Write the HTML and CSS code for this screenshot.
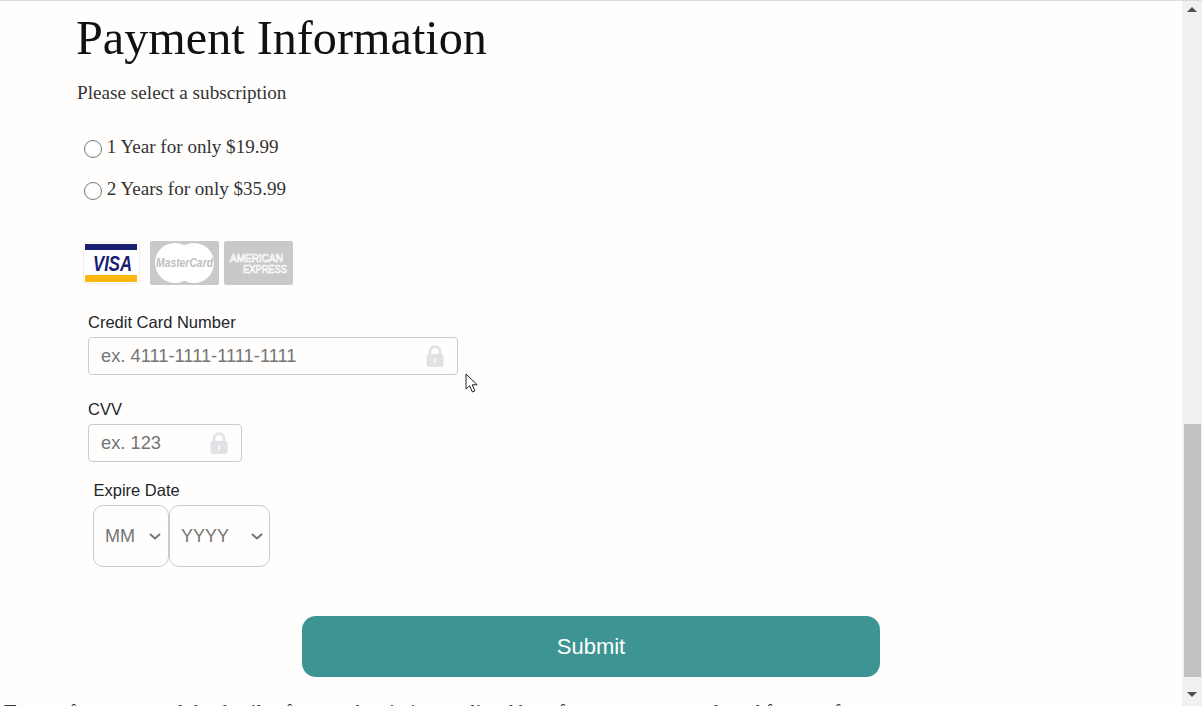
FILE: index.html
```html
<!DOCTYPE html>
<html lang="en">
<head>
    <meta charset="UTF-8">
    <meta name="viewport" content="width=device-width, initial-scale=1.0">
    <title>Payment Information</title>
    <link rel="stylesheet" href="styles.css">
</head>
<body>
    <div class="page">
        <main class="content">
            <h1>Payment Information</h1>
            <p class="intro">Please select a subscription</p>

            <div class="plans">
                <label class="plan plan-first"><input type="radio" name="plan"> 1 Year for only $19.99</label>
                <label class="plan plan-second"><input type="radio" name="plan"> 2 Years for only $35.99</label>
            </div>

            <!-- Card logos -->
            <div class="cards">
                <svg class="card-visa" width="57" height="42" viewBox="0 0 57 42">
                    <rect x="0.5" y="0.5" width="56" height="41" rx="2" fill="#fff" stroke="#eeeeee"/>
                    <rect x="2" y="2" width="52" height="6" fill="#1a2070"/>
                    <rect x="2" y="33" width="52" height="7" fill="#fbb50f"/>
                    <text x="10" y="29" textLength="39" lengthAdjust="spacingAndGlyphs" class="visa-text">VISA</text>
                </svg>
                <svg width="69" height="44" viewBox="0 0 69 44">
                    <rect width="69" height="44" rx="2" fill="#c9c9c9"/>
                    <circle cx="25" cy="22" r="20" fill="#fff"/>
                    <circle cx="44" cy="22" r="20" fill="#fff"/>
                    <text x="6" y="26" textLength="57" lengthAdjust="spacingAndGlyphs" class="mc-text">MasterCard</text>
                </svg>
                <svg width="69" height="44" viewBox="0 0 69 44">
                    <rect width="69" height="44" rx="2" fill="#c9c9c9"/>
                    <text x="6" y="21" textLength="53" lengthAdjust="spacingAndGlyphs" class="amex-text">AMERICAN</text>
                    <text x="19" y="32" textLength="44" lengthAdjust="spacingAndGlyphs" class="amex-text">EXPRESS</text>
                </svg>
            </div>

            <form class="payment-form">
                <div class="field field-number">
                    <label for="card-number">Credit Card Number</label>
                    <div class="input-wrap input-number">
                        <input type="text" id="card-number" placeholder="ex. 4111-1111-1111-1111">
                        <svg class="lock" width="18" height="22" viewBox="0 0 18 22">
                            <path d="M4 9V6.5a5 5 0 0 1 10 0V9" fill="none" stroke="#e1e2e6" stroke-width="2.6"/>
                            <rect x="0.5" y="9" width="17" height="13" rx="2" fill="#e1e2e6"/>
                            <rect x="8" y="13" width="2" height="5" fill="#f7f7f8"/>
                        </svg>
                    </div>
                </div>

                <div class="field field-cvv">
                    <label for="card-cvv">CVV</label>
                    <div class="input-wrap input-cvv">
                        <input type="text" id="card-cvv" placeholder="ex. 123">
                        <svg class="lock" width="18" height="22" viewBox="0 0 18 22">
                            <path d="M4 9V6.5a5 5 0 0 1 10 0V9" fill="none" stroke="#e1e2e6" stroke-width="2.6"/>
                            <rect x="0.5" y="9" width="17" height="13" rx="2" fill="#e1e2e6"/>
                            <rect x="8" y="13" width="2" height="5" fill="#f7f7f8"/>
                        </svg>
                    </div>
                </div>

                <div class="field field-expire">
                    <label>Expire Date</label>
                    <div class="expire-row">
                        <div class="select-wrap select-month">
                            <select><option>MM</option></select>
                            <svg class="chevron" width="12" height="7" viewBox="0 0 12 7"><path d="M1 1l5 4.5L11 1" fill="none" stroke="#757575" stroke-width="2"/></svg>
                        </div>
                        <div class="select-wrap select-year">
                            <select><option>YYYY</option></select>
                            <svg class="chevron" width="12" height="7" viewBox="0 0 12 7"><path d="M1 1l5 4.5L11 1" fill="none" stroke="#757575" stroke-width="2"/></svg>
                        </div>
                    </div>
                </div>

                <div class="submit-row">
                    <button type="submit">Submit</button>
                </div>
            </form>

            <p class="next-text">Terms of payment and the details of your subscription are listed here for your own records and future reference</p>
        </main>

        <div class="scrollbar">
            <div class="scroll-btn"><span class="arrow-up"></span></div>
            <div class="scroll-track"><div class="scroll-thumb"></div></div>
            <div class="scroll-btn scroll-btn-down"><span class="arrow-down"></span></div>
        </div>
    </div>

    <!-- mouse pointer -->
    <svg class="pointer" width="14" height="20" viewBox="0 0 14 20">
        <path d="M1 1v15l3.6-3.3L7.4 19l2.5-1.1-2.7-6.1h5z" fill="#fff" stroke="#222" stroke-width="1"/>
    </svg>
</body>
</html>
```

FILE: styles.css
```css
html, body {
    margin: 0;
    height: 100%;
    overflow: hidden;
}

body {
    background-color: #fffefd;
    font-family: "Liberation Serif", serif;
    color: #333;
}

.page {
    display: flex;
    height: 706px;
    border-top: 1px solid #dedede;
    box-sizing: border-box;
}

.content {
    flex: 1;
    padding-left: 77px;
    overflow: hidden;
}

h1 {
    margin: 9px 0 0 -1px;
    font-size: 48.2px;
    font-weight: 400;
    line-height: 55px;
    color: #111;
}

.intro {
    margin: 17px 0 0;
    font-size: 19.2px;
    line-height: 22px;
}

.plans {
    margin: 32px 0 0 7px;
}

.plan {
    display: block;
    font-size: 19.1px;
    line-height: 22px;
}

.plan input {
    width: 18px;
    height: 18px;
    margin: 0;
    vertical-align: -5px;
}

.plan-second {
    margin-top: 19.5px;
}

.cards {
    display: flex;
    align-items: center;
    gap: 5px;
    margin: 41.5px 0 0 6px;
}

.cards svg {
    overflow: visible;
}

.card-visa {
    margin-right: 5px;
}

.visa-text {
    font-family: "Liberation Sans", sans-serif;
    font-size: 22px;
    font-weight: 700;
    font-style: italic;
    fill: #1a2070;
}

.mc-text {
    font-family: "Liberation Sans", sans-serif;
    font-size: 12px;
    font-weight: 700;
    font-style: italic;
    fill: #c0c0c0;
}

.amex-text {
    font-family: "Liberation Sans", sans-serif;
    font-size: 11px;
    font-weight: 400;
    fill: #c9c9c9;
    stroke: #fff;
    stroke-width: 0.7;
}

.payment-form {
    font-family: "Liberation Sans", sans-serif;
}

.field label {
    display: block;
    font-size: 16.5px;
    line-height: 18px;
    color: #212529;
}

.field-number {
    margin: 28px 0 0 11px;
}

.field-cvv {
    margin: 25px 0 0 11px;
}

.field-expire {
    margin: 19px 0 0 16px;
}

.field-expire label {
    padding-left: 0.5px;
}

.input-wrap {
    position: relative;
    margin-top: 6px;
}

.input-number {
    width: 370px;
}

.input-cvv {
    width: 154px;
}

.input-wrap input {
    box-sizing: border-box;
    width: 100%;
    height: 38px;
    padding: 0 12px;
    border: 1px solid #ccc;
    border-radius: 4px;
    background: transparent;
    font-family: "Liberation Sans", sans-serif;
    font-size: 18.3px;
    color: #333;
}

.input-wrap input::placeholder {
    color: #757575;
    opacity: 1;
}

.lock {
    position: absolute;
    top: 8px;
    right: 14px;
}

.expire-row {
    display: flex;
    margin-top: 6px;
}

.select-wrap {
    position: relative;
}

.select-wrap select {
    appearance: none;
    box-sizing: border-box;
    width: 100%;
    height: 62px;
    padding: 0 11px;
    border: 1px solid #ccc;
    border-radius: 10px;
    background-color: transparent;
    font-family: "Liberation Sans", sans-serif;
    font-size: 18px;
    color: #757575;
}

.select-month {
    width: 76px;
}

.select-month .chevron {
    right: 8px;
}

.select-year {
    width: 101px;
}

.chevron {
    position: absolute;
    top: 28px;
    right: 7px;
}

.submit-row {
    display: flex;
    justify-content: center;
    margin-top: 49px;
    margin-left: -77px;
}

.submit-row button {
    width: 578px;
    height: 61px;
    border: none;
    border-radius: 14px;
    background-color: #3d9492;
    color: #fff;
    font-family: "Liberation Sans", sans-serif;
    font-size: 22px;
    cursor: pointer;
}

.next-text {
    margin: 22px 0 0 -73px;
    font-size: 20px;
    line-height: 26px;
    white-space: nowrap;
}

.scrollbar {
    display: flex;
    flex-direction: column;
    width: 20px;
    background-color: #f1f1f1;
}

.scroll-btn {
    display: flex;
    align-items: center;
    justify-content: center;
    height: 17px;
}

.scroll-btn-down {
    align-items: flex-end;
    height: 29px;
    padding-bottom: 9px;
    box-sizing: border-box;
}

.arrow-up {
    border: 5px solid transparent;
    border-top: none;
    border-bottom: 5px solid #505050;
}

.arrow-down {
    border: 5px solid transparent;
    border-bottom: none;
    border-top: 5px solid #505050;
}

.scroll-track {
    display: flex;
    flex: 1;
    flex-direction: column;
    justify-content: flex-end;
    padding: 0 1px 0 2px;
}

.scroll-thumb {
    height: 253px;
    background-color: #c1c1c1;
}

.pointer {
    position: absolute;
    left: 465px;
    top: 373px;
}
```
